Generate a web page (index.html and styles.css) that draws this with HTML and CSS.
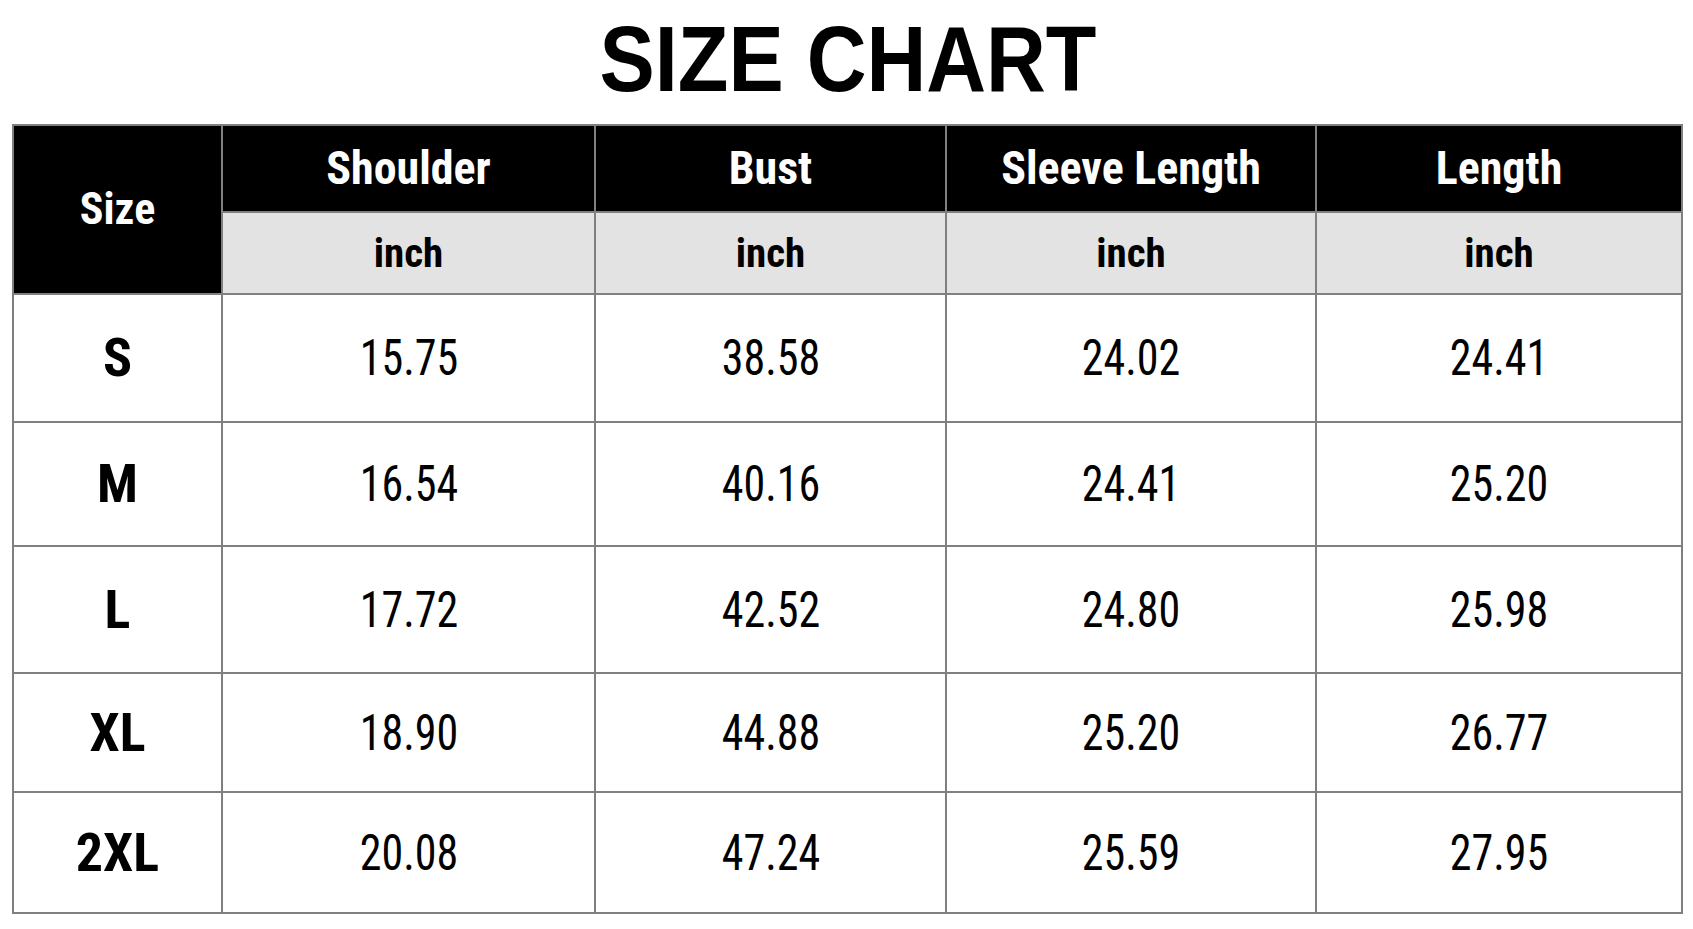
FILE: index.html
```html
<!DOCTYPE html>
<html lang="en">
<head>
<meta charset="utf-8">
<title>Size Chart</title>
<link rel="stylesheet" href="styles.css">
</head>
<body>
<main class="page">
  <h1 class="title"><span class="title-text">SIZE CHART</span></h1>
  <div class="chart">
    <div class="cell head size-head">Size</div>
    <div class="cell head">Shoulder</div>
    <div class="cell head">Bust</div>
    <div class="cell head">Sleeve Length</div>
    <div class="cell head">Length</div>
    <div class="cell unit">inch</div>
    <div class="cell unit">inch</div>
    <div class="cell unit">inch</div>
    <div class="cell unit">inch</div>

    <div class="cell size">S</div>
    <div class="cell val"><span class="num">15.75</span></div>
    <div class="cell val"><span class="num">38.58</span></div>
    <div class="cell val"><span class="num">24.02</span></div>
    <div class="cell val"><span class="num">24.41</span></div>

    <div class="cell size">M</div>
    <div class="cell val"><span class="num">16.54</span></div>
    <div class="cell val"><span class="num">40.16</span></div>
    <div class="cell val"><span class="num">24.41</span></div>
    <div class="cell val"><span class="num">25.20</span></div>

    <div class="cell size">L</div>
    <div class="cell val"><span class="num">17.72</span></div>
    <div class="cell val"><span class="num">42.52</span></div>
    <div class="cell val"><span class="num">24.80</span></div>
    <div class="cell val"><span class="num">25.98</span></div>

    <div class="cell size">XL</div>
    <div class="cell val"><span class="num">18.90</span></div>
    <div class="cell val"><span class="num">44.88</span></div>
    <div class="cell val"><span class="num">25.20</span></div>
    <div class="cell val"><span class="num">26.77</span></div>

    <div class="cell size">2XL</div>
    <div class="cell val"><span class="num">20.08</span></div>
    <div class="cell val"><span class="num">47.24</span></div>
    <div class="cell val"><span class="num">25.59</span></div>
    <div class="cell val"><span class="num">27.95</span></div>
  </div>
</main>
</body>
</html>
```
FILE: styles.css
```css
* { box-sizing: border-box; }

html, body {
  margin: 0;
  padding: 0;
  background: #ffffff;
}

.page {
  width: 1693px;
  height: 929px;
  padding: 13px 0 0 12px;
}

.title {
  margin: 0;
  height: 92px;
  width: 1671px;
  text-align: center;
  font-family: "Liberation Sans", Arial, sans-serif;
  font-weight: 700;
  font-size: 92px;
  line-height: 92px;
  color: #000;
}

.title-text {
  display: inline-block;
  transform: scaleX(0.9);
}

.chart {
  margin-top: 19px;
  display: grid;
  grid-template-columns: 209px 373px 351px 370px 366px;
  grid-template-rows: 87px 82px 128px 124px 127px 119px 121px;
  width: 1671px;
  border-left: 2px solid #808080;
  border-top: 2px solid #808080;
  font-family: "Roboto Condensed", "Roboto", sans-serif;
  color: #000;
}

.cell {
  display: flex;
  align-items: center;
  justify-content: center;
  border-right: 2px solid #808080;
  border-bottom: 2px solid #808080;
  line-height: 1;
}

.head {
  background: #000;
  color: #fff;
  font-weight: 700;
  font-size: 46px;
  font-stretch: 75%;
  padding-bottom: 2px;
}

.size-head {
  grid-row: 1 / span 2;
  font-size: 44px;
}

.unit {
  background: #e3e3e3;
  font-weight: 700;
  font-size: 41px;
  font-stretch: 75%;
}

.size {
  font-weight: 700;
  font-size: 54px;
  font-stretch: 75%;
}

.val {
  font-weight: 400;
  font-size: 50px;
  font-stretch: 75%;
}

.num {
  display: inline-block;
  transform: scaleX(0.88);
}
```
